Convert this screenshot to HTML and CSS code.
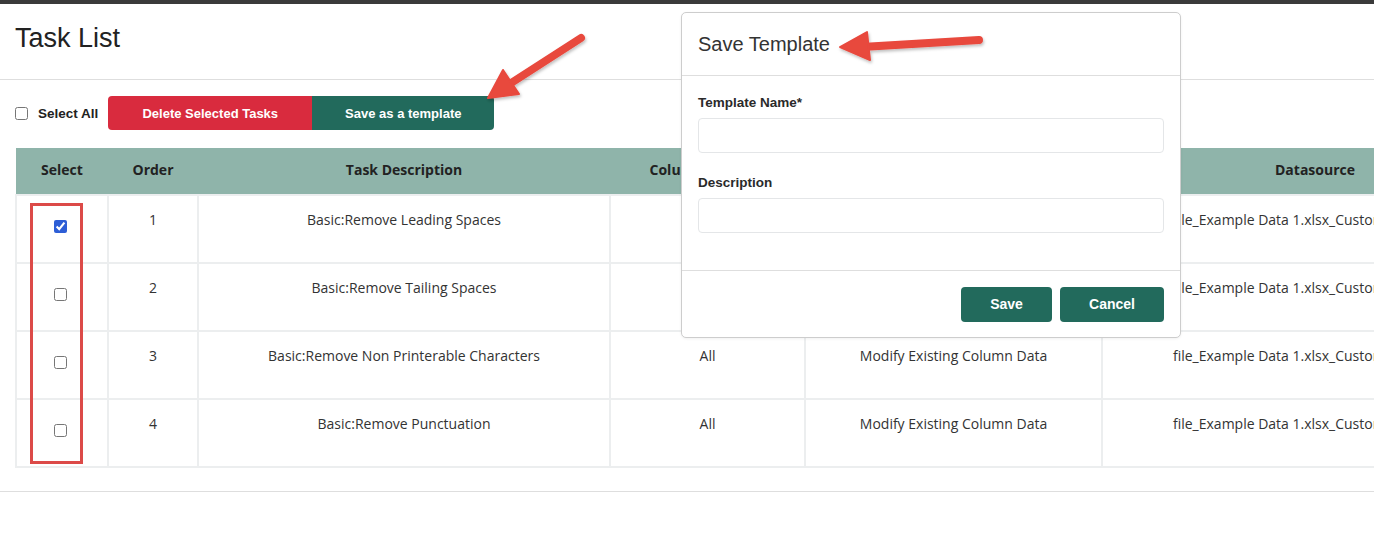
FILE: index.html
```html
<!DOCTYPE html>
<html lang="en">
<head>
<meta charset="utf-8">
<title>Task List</title>
<link rel="stylesheet" href="styles.css">
</head>
<body>
<div class="topbar"></div>
<div class="page">
  <header class="page-header">
    <h1 class="title">Task List</h1>
  </header>
  <div class="toolbar">
    <label class="select-all"><input type="checkbox" class="cb"> <span>Select All</span></label>
    <div class="btn-group">
      <button class="btn btn-danger">Delete Selected Tasks</button>
      <button class="btn btn-teal">Save as a template</button>
    </div>
  </div>
  <div class="table-wrap">
    <table class="tasks">
      <colgroup>
        <col class="c-select"><col class="c-order"><col class="c-desc"><col class="c-col"><col class="c-type"><col class="c-ds">
      </colgroup>
      <thead>
        <tr><th>Select</th><th>Order</th><th>Task Description</th><th>Column Name(s)</th><th>Operation Type</th><th>Datasource</th></tr>
      </thead>
      <tbody>
        <tr><td class="sel"><input type="checkbox" class="cb" checked></td><td>1</td><td>Basic:Remove Leading Spaces</td><td>All</td><td>Modify Existing Column Data</td><td>file_Example Data 1.xlsx_Customers_Sheet1</td></tr>
        <tr><td class="sel"><input type="checkbox" class="cb"></td><td>2</td><td>Basic:Remove Tailing Spaces</td><td>All</td><td>Modify Existing Column Data</td><td>file_Example Data 1.xlsx_Customers_Sheet1</td></tr>
        <tr><td class="sel"><input type="checkbox" class="cb"></td><td>3</td><td>Basic:Remove Non Printerable Characters</td><td>All</td><td>Modify Existing Column Data</td><td>file_Example Data 1.xlsx_Customers_Sheet1</td></tr>
        <tr><td class="sel"><input type="checkbox" class="cb"></td><td>4</td><td>Basic:Remove Punctuation</td><td>All</td><td>Modify Existing Column Data</td><td>file_Example Data 1.xlsx_Customers_Sheet1</td></tr>
      </tbody>
    </table>
  </div>
  <div class="page-footer"></div>

  <div class="highlight-box"></div>

  <div class="modal">
    <div class="modal-header">
      <h2 class="modal-title">Save Template</h2>
    </div>
    <div class="modal-body">
      <label class="form-label">Template Name*</label>
      <input class="form-input" type="text">
      <label class="form-label second">Description</label>
      <input class="form-input" type="text">
    </div>
    <div class="modal-footer">
      <button class="btn btn-teal btn-save">Save</button>
      <button class="btn btn-teal btn-cancel">Cancel</button>
    </div>
  </div>

  <svg class="arrows" width="1374" height="555" viewBox="0 0 1374 555" xmlns="http://www.w3.org/2000/svg">
    <defs>
      <filter id="sh" x="-20%" y="-20%" width="140%" height="140%">
        <feDropShadow dx="1" dy="2" stdDeviation="1.5" flood-color="#000" flood-opacity="0.25"/>
      </filter>
    </defs>
    <g filter="url(#sh)" fill="#e8483d" stroke="#e8483d">
      <line x1="581" y1="38" x2="508" y2="85" stroke-width="8" stroke-linecap="round"/>
      <polygon points="488,98 503,70 519,94" stroke-width="2" stroke-linejoin="round"/>
      <line x1="979" y1="40" x2="862" y2="47" stroke-width="8" stroke-linecap="round"/>
      <polygon points="840,47 867,32 870,60" stroke-width="2" stroke-linejoin="round"/>
    </g>
  </svg>
</div>
</body>
</html>
```

FILE: styles.css
```css
* { box-sizing: border-box; }
html, body { margin: 0; padding: 0; background: #fff; }
body { font-family: "Liberation Sans", Arial, sans-serif; color: #212529; width: 1374px; height: 555px; overflow: hidden; }

.topbar { height: 4px; background: #3a3a3a; }
.page { position: relative; }

.page-header { height: 76px; border-bottom: 1px solid #dedede; padding: 20px 15px 0; }
.title { margin: 0; font-weight: 400; font-size: 27px; line-height: 28px; color: #222; }

.toolbar { display: flex; align-items: center; padding: 16px 15px 0; height: 50px; }
.select-all { display: flex; align-items: center; gap: 10px; font-weight: 700; font-size: 13.5px; color: #222; margin-right: 10px; }
.cb { width: 13px; height: 13px; margin: 0; accent-color: #2d5ed6; }
.btn-group { display: flex; }
.btn { border: none; color: #fff; font-family: "Liberation Sans", Arial, sans-serif; font-weight: 700; font-size: 13px; height: 34px; padding: 0; cursor: pointer; }
.btn-danger { background: #d92b3e; width: 204px; border-radius: 4px 0 0 4px; }
.btn-teal { background: #226a5c; }
.btn-group .btn-teal { width: 182px; border-radius: 0 4px 4px 0; }

.table-wrap { margin: 18px 0 0 15px; overflow: hidden; }
.tasks { border-collapse: collapse; table-layout: fixed; width: 1506px; font-family: "Open Sans", "Noto Sans", sans-serif; font-size: 14px; color: #333; }
.c-select { width: 92px; }
.c-order { width: 90px; }
.c-desc { width: 412px; }
.c-col { width: 195px; }
.c-type { width: 297px; }
.c-ds { width: 426px; }
.tasks th { background: #8fb4aa; height: 47px; padding: 0 0 3px; font-weight: 700; color: #222; text-align: center; vertical-align: middle; border: none; white-space: nowrap; }
.tasks td { height: 68px; border: 2px solid #eceeef; text-align: center; vertical-align: top; padding: 13px 8px 11px; line-height: 21px; white-space: nowrap; overflow: hidden; }
.tasks td.sel { vertical-align: middle; padding: 0 2px 2px 0; }
.tasks td.sel .cb { display: block; margin: 0 auto; position: relative; left: -1px; top: -2px; }

.page-footer { margin-top: 23px; border-top: 1px solid #dedede; }

.highlight-box { position: absolute; left: 30px; top: 199px; width: 53px; height: 261px; border: 3px solid #dc4a48; }

.modal { position: absolute; left: 681px; top: 8px; width: 500px; height: 326px; background: #fff; border: 1px solid #cdcdcd; border-radius: 5px; box-shadow: 0 1px 3px rgba(0,0,0,0.06); display: flex; flex-direction: column; }
.modal-header { height: 63px; border-bottom: 1px solid #dedede; padding: 0 16px; display: flex; align-items: center; }
.modal-title { margin: 0; font-weight: 400; font-size: 20px; color: #333; padding-top: 1px; }
.modal-body { padding: 19px 16px 0; height: 195px; border-bottom: 1px solid #dedede; display: flex; flex-direction: column; }
.form-label { font-weight: 700; font-size: 13.5px; line-height: 16px; color: #2a2a2a; margin-bottom: 7px; }
.form-label.second { margin-top: 22px; }
.form-input { height: 35px; border: 1px solid #e4e6e8; border-radius: 4px; width: 100%; margin: 0; }
.modal-footer { display: flex; justify-content: flex-end; gap: 8px; padding: 16px 16px 0; }
.modal-footer .btn { font-size: 14px; height: 35px; border-radius: 4px; padding-bottom: 1px; }
.btn-save { width: 91px; }
.btn-cancel { width: 104px; }

.arrows { position: absolute; left: 0; top: -4px; pointer-events: none; }
```
